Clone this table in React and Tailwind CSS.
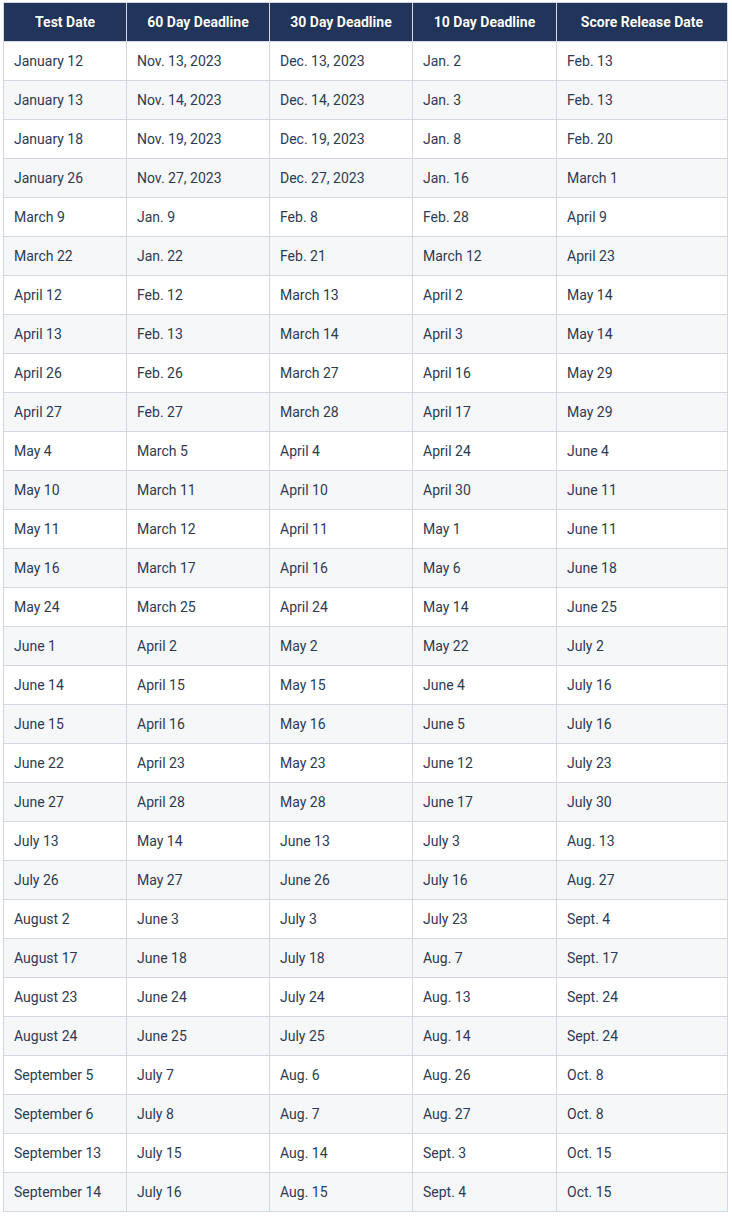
import React from 'react';

const rows = [
  ['January 12', 'Nov. 13, 2023', 'Dec. 13, 2023', 'Jan. 2', 'Feb. 13'],
  ['January 13', 'Nov. 14, 2023', 'Dec. 14, 2023', 'Jan. 3', 'Feb. 13'],
  ['January 18', 'Nov. 19, 2023', 'Dec. 19, 2023', 'Jan. 8', 'Feb. 20'],
  ['January 26', 'Nov. 27, 2023', 'Dec. 27, 2023', 'Jan. 16', 'March 1'],
  ['March 9', 'Jan. 9', 'Feb. 8', 'Feb. 28', 'April 9'],
  ['March 22', 'Jan. 22', 'Feb. 21', 'March 12', 'April 23'],
  ['April 12', 'Feb. 12', 'March 13', 'April 2', 'May 14'],
  ['April 13', 'Feb. 13', 'March 14', 'April 3', 'May 14'],
  ['April 26', 'Feb. 26', 'March 27', 'April 16', 'May 29'],
  ['April 27', 'Feb. 27', 'March 28', 'April 17', 'May 29'],
  ['May 4', 'March 5', 'April 4', 'April 24', 'June 4'],
  ['May 10', 'March 11', 'April 10', 'April 30', 'June 11'],
  ['May 11', 'March 12', 'April 11', 'May 1', 'June 11'],
  ['May 16', 'March 17', 'April 16', 'May 6', 'June 18'],
  ['May 24', 'March 25', 'April 24', 'May 14', 'June 25'],
  ['June 1', 'April 2', 'May 2', 'May 22', 'July 2'],
  ['June 14', 'April 15', 'May 15', 'June 4', 'July 16'],
  ['June 15', 'April 16', 'May 16', 'June 5', 'July 16'],
  ['June 22', 'April 23', 'May 23', 'June 12', 'July 23'],
  ['June 27', 'April 28', 'May 28', 'June 17', 'July 30'],
  ['July 13', 'May 14', 'June 13', 'July 3', 'Aug. 13'],
  ['July 26', 'May 27', 'June 26', 'July 16', 'Aug. 27'],
  ['August 2', 'June 3', 'July 3', 'July 23', 'Sept. 4'],
  ['August 17', 'June 18', 'July 18', 'Aug. 7', 'Sept. 17'],
  ['August 23', 'June 24', 'July 24', 'Aug. 13', 'Sept. 24'],
  ['August 24', 'June 25', 'July 25', 'Aug. 14', 'Sept. 24'],
  ['September 5', 'July 7', 'Aug. 6', 'Aug. 26', 'Oct. 8'],
  ['September 6', 'July 8', 'Aug. 7', 'Aug. 27', 'Oct. 8'],
  ['September 13', 'July 15', 'Aug. 14', 'Sept. 3', 'Oct. 15'],
  ['September 14', 'July 16', 'Aug. 15', 'Sept. 4', 'Oct. 15'],
];

const headers = ['Test Date', '60 Day Deadline', '30 Day Deadline', '10 Day Deadline', 'Score Release Date'];
const widths = ['w-[123px]', 'w-[143px]', 'w-[143px]', 'w-[144px]', 'w-[171px]'];

const App = () => {
  return (
    <div className="bg-white pt-[2px] pl-[3px] font-['Roboto',sans-serif]">
      <table className="w-[724px] table-fixed border-collapse">
        <colgroup>
          {widths.map((w, i) => (
            <col key={i} className={w} />
          ))}
        </colgroup>
        <thead>
          <tr className="h-[39px] bg-[#21345a]">
            {headers.map((h) => (
              <th
                key={h}
                className="border border-[#d3d8e0] text-center text-[14px] font-bold text-white [text-shadow:0_0_1px_rgba(0,0,0,0.4)]"
              >
                {h}
              </th>
            ))}
          </tr>
        </thead>
        <tbody>
          {rows.map((r, idx) => (
            <tr key={idx} className={`h-[39px] ${idx % 2 === 1 ? 'bg-[#f6f7f9]' : 'bg-white'}`}>
              {r.map((c, j) => (
                <td key={j} className="border border-[#d3d8e0] pl-[10px] text-left text-[14px] text-[#2e3a52]">
                  {c}
                </td>
              ))}
            </tr>
          ))}
        </tbody>
      </table>
    </div>
  );
};

export default App;
